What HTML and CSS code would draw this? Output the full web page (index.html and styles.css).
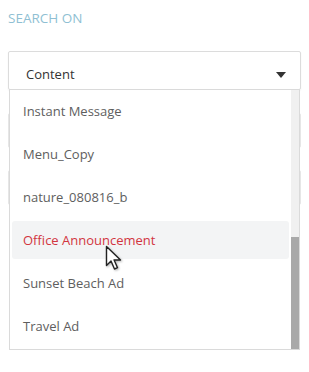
FILE: index.html
```html
<!DOCTYPE html>
<html lang="en">
<head>
    <meta charset="UTF-8">
    <meta name="viewport" content="width=device-width, initial-scale=1.0">
    <title>Search On</title>
    <link rel="stylesheet" href="styles.css">
</head>
<body>
    <div class="panel">
        <h4 class="label">SEARCH ON</h4>
        <div class="field">
            <div class="select">
                <span>Content</span>
                <svg class="caret" width="10" height="6" viewBox="0 0 10 6"><path d="M0 0h10L5 6z" fill="#333"/></svg>
            </div>
            <div class="behind">
                <div class="ghost"></div>
                <div class="ghost"></div>
            </div>
            <div class="menu">
                <ul>
                    <li>Instant Message</li>
                    <li>Menu_Copy</li>
                    <li>nature_080816_b</li>
                    <li class="active">Office Announcement</li>
                    <li>Sunset Beach Ad</li>
                    <li>Travel Ad</li>
                </ul>
                <div class="scrollbar"><div class="thumb"></div></div>
                <svg class="cursor" width="17" height="26" viewBox="0 0 17 26">
                    <path d="M1.5 1.5v19l4.5-4.5 3.5 8 3-1.3-3.4-7.7h6.4z" fill="#fff" stroke="#222" stroke-width="1.4" stroke-linejoin="round"/>
                </svg>
            </div>
        </div>
    </div>
</body>
</html>
```

FILE: styles.css
```css
* {
    margin: 0;
    padding: 0;
    box-sizing: border-box;
}

body {
    font-family: 'Open Sans', 'Segoe UI', sans-serif;
    background: #fff;
    color: #333;
    width: 309px;
    height: 372px;
    overflow: hidden;
}

.panel {
    padding: 10px 8px 0 8px;
}

.label {
    font-size: 13.5px;
    font-weight: 400;
    color: #8fbfd3;
    line-height: 17px;
    margin-bottom: 24px;
}

.field {
    position: relative;
}

.select {
    height: 39px;
    border: 1px solid #dcdcdc;
    border-radius: 2px;
    box-shadow: 0 1px 2px rgba(0, 0, 0, 0.06);
    display: flex;
    align-items: flex-end;
    justify-content: space-between;
    padding: 0 14px 6px 17px;
    font-size: 13px;
    color: #333;
}

.caret {
    margin-bottom: 5px;
}

.behind {
    display: flex;
    flex-direction: column;
    gap: 22px;
    padding-top: 23px;
}

.ghost {
    height: 35px;
    border: 1px solid #e6e6e6;
    border-radius: 2px;
}

.menu {
    position: absolute;
    top: 38px;
    left: 1px;
    right: 1px;
    height: 261px;
    background: #fff;
    border: 1px solid #dadada;
    display: flex;
    padding: 0 0 0 2px;
}

.menu ul {
    list-style: none;
    flex: 1;
    padding-right: 2px;
}

.menu li {
    height: 43px;
    line-height: 43px;
    padding-left: 11px;
    font-size: 13px;
    color: #5e5e5e;
    border-radius: 3px;
}

.menu li.active {
    background: #f3f4f5;
    color: #d2353f;
    height: 38px;
    line-height: 38px;
    margin: 2px 0 3px;
}

.scrollbar {
    width: 8px;
    background: #f0f0f0;
    display: flex;
    flex-direction: column;
    justify-content: flex-end;
}

.thumb {
    height: 112px;
    background: #a9a9a9;
}

.cursor {
    position: absolute;
    left: 95px;
    top: 155px;
    filter: drop-shadow(1px 1px 1px rgba(0, 0, 0, 0.3));
}
```
